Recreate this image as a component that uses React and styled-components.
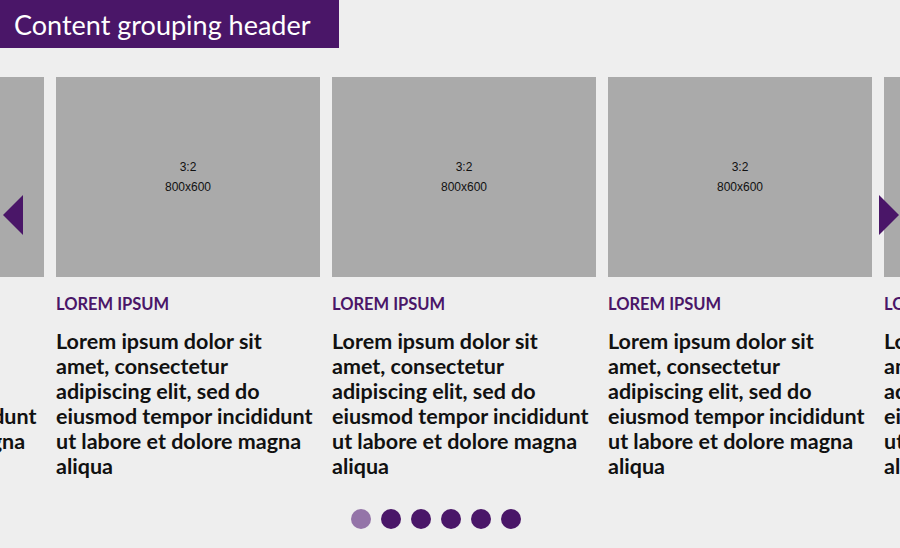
import React from "react";
import styled, { createGlobalStyle } from "styled-components";

const Global = createGlobalStyle`
  html, body { margin: 0; padding: 0; background: #eeeeee; }
  body { font-family: "Lato", "Noto Sans", sans-serif; }
`;

const PURPLE = "#4a1668";

const Page = styled.div`
  width: 900px;
  height: 548px;
  overflow: hidden;
  background: #eeeeee;
  display: flex;
  flex-direction: column;
`;

const Header = styled.h2`
  margin: 0;
  box-sizing: border-box;
  width: 339px;
  height: 48px;
  padding: 0 0 0 14px;
  display: flex;
  align-items: center;
  background: ${PURPLE};
  color: #ffffff;
  font-family: "Lato", sans-serif;
  font-weight: 400;
  font-size: 27px;
`;

const Carousel = styled.div`
  position: relative;
  margin-top: 29px;
  overflow: hidden;
`;

const Track = styled.div`
  display: flex;
  gap: 12px;
  margin-left: -220px;
`;

const Card = styled.article`
  flex: 0 0 264px;
  width: 264px;
`;

const Img = styled.div`
  height: 200px;
  background: #aaaaaa;
  display: flex;
  flex-direction: column;
  align-items: center;
  justify-content: center;
  font-family: "Liberation Sans", Arial, sans-serif;
  font-size: 12px;
  line-height: 20px;
  color: #111111;
  padding-bottom: 1px;
  box-sizing: border-box;
`;

const Label = styled.div`
  margin-top: 17px;
  color: ${PURPLE};
  font-weight: 700;
  font-size: 16.5px;
  line-height: 20px;
  text-transform: uppercase;
`;

const Body = styled.p`
  margin: 15px 0 0;
  color: #111111;
  font-weight: 700;
  font-size: 21.5px;
  line-height: 25px;
`;

const Arrow = styled.button`
  position: absolute;
  top: 118px;
  ${(p) => (p.$side === "left" ? "left: 3px;" : "right: 1px;")}
  width: 20px;
  height: 40px;
  padding: 0;
  border: 0;
  background: transparent;
  cursor: pointer;
  svg { display: block; }
`;

const Dots = styled.div`
  display: flex;
  gap: 10px;
  margin-top: 30px;
  margin-left: 351px;
`;

const Dot = styled.span`
  width: 20px;
  height: 20px;
  border-radius: 50%;
  background: ${(p) => (p.$active ? "#9474a8" : PURPLE)};
`;

const text =
  "Lorem ipsum dolor sit amet, consectetur adipiscing elit, sed do eiusmod tempor incididunt ut labore et dolore magna aliqua";

export default function App() {
  const cards = [0, 1, 2, 3, 4];
  return (
    <>
      <Global />
      <Page>
        <Header>Content grouping header</Header>
        <Carousel>
          <Track>
            {cards.map((i) => (
              <Card key={i}>
                <Img>
                  <span>3:2</span>
                  <span>800x600</span>
                </Img>
                <Label>Lorem ipsum</Label>
                <Body>{text}</Body>
              </Card>
            ))}
          </Track>
          <Arrow $side="left" aria-label="Previous">
            <svg width="20" height="40" viewBox="0 0 20 40">
              <polygon points="20,0 0,20 20,40" fill={PURPLE} />
            </svg>
          </Arrow>
          <Arrow $side="right" aria-label="Next">
            <svg width="20" height="40" viewBox="0 0 20 40">
              <polygon points="0,0 20,20 0,40" fill={PURPLE} />
            </svg>
          </Arrow>
        </Carousel>
        <Dots>
          {[0, 1, 2, 3, 4, 5].map((i) => (
            <Dot key={i} $active={i === 0} />
          ))}
        </Dots>
      </Page>
    </>
  );
}
